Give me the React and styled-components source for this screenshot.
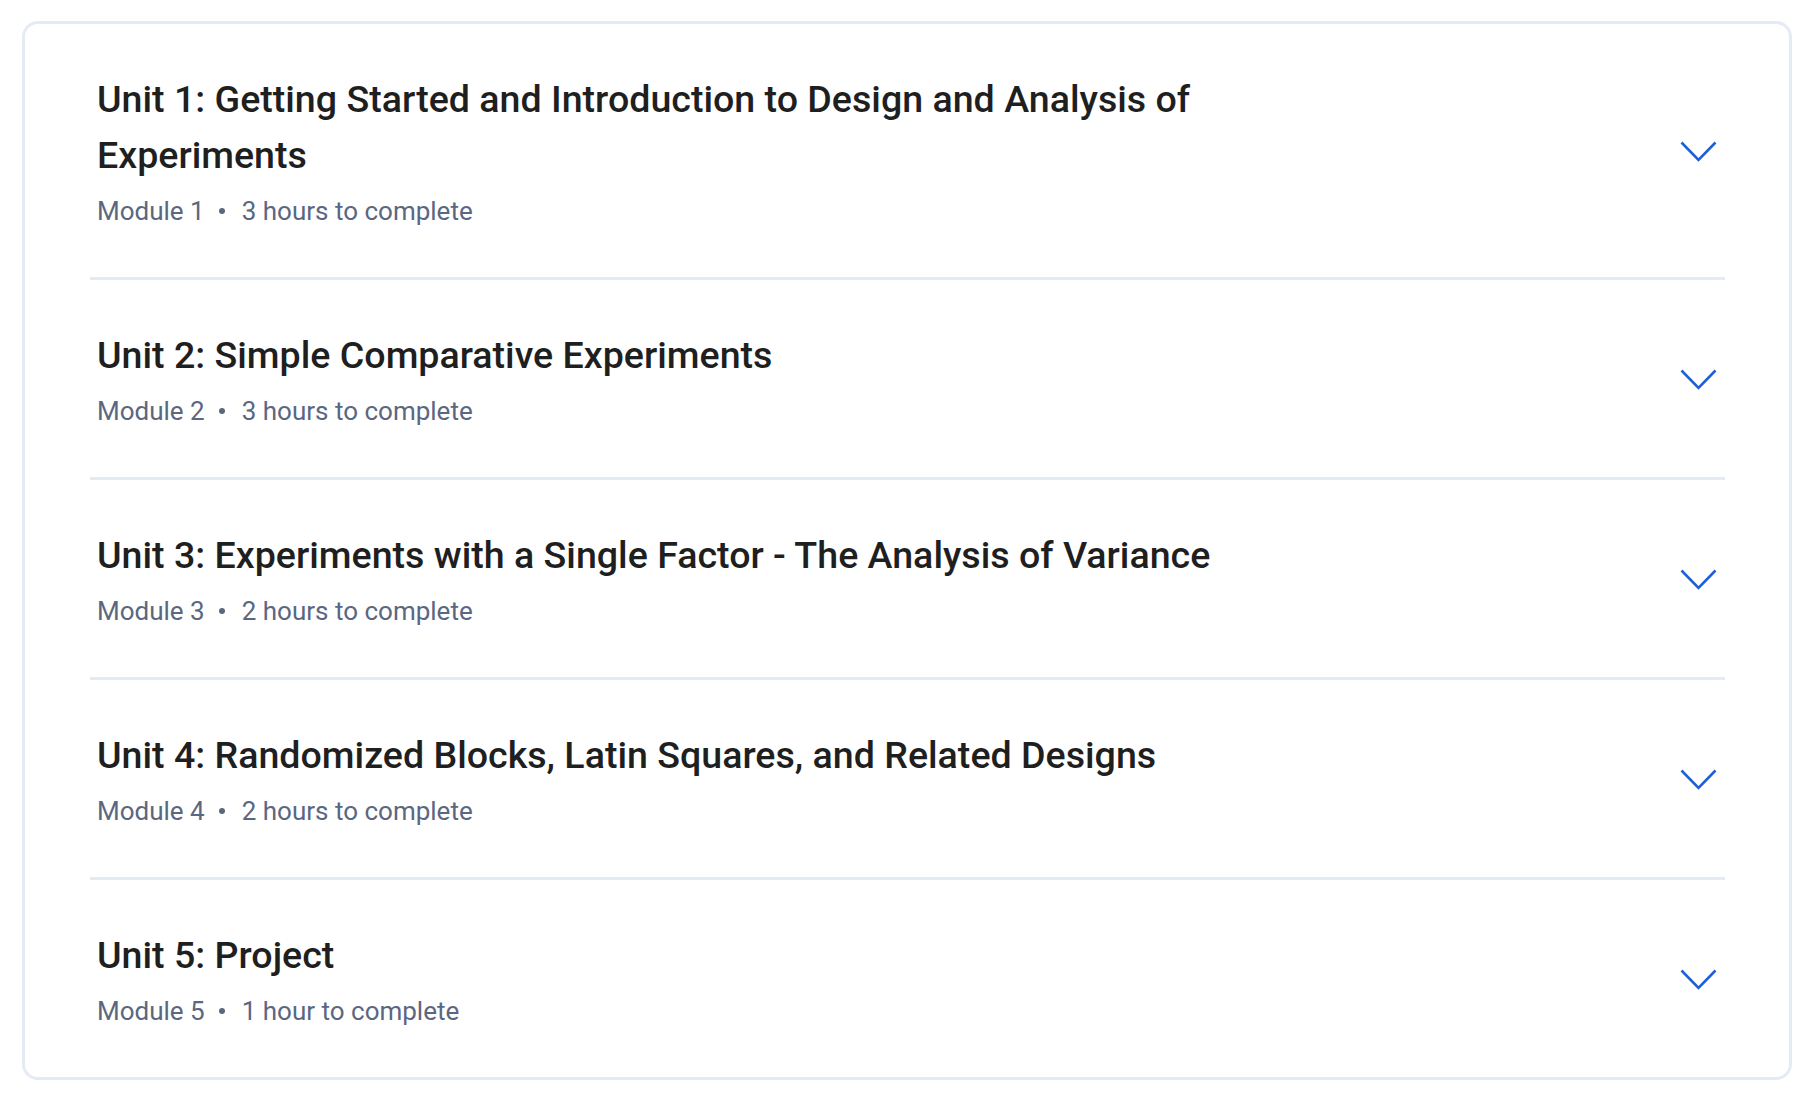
import React from "react";
import styled, { createGlobalStyle } from "styled-components";

const GlobalStyle = createGlobalStyle`
  body {
    margin: 0;
    background: #ffffff;
    font-family: "Roboto", "Liberation Sans", sans-serif;
  }
`;

const Page = styled.div`
  padding: 21px 22px 20px;
`;

const Card = styled.div`
  border: 3px solid #e5ebf4;
  border-radius: 16px;
  padding: 0 64px 0 65px;
  background: #ffffff;
`;

const Item = styled.div`
  display: flex;
  align-items: center;
  justify-content: space-between;
  padding: 47px 8px 46px 7px;
  border-top: ${props => (props.first ? "none" : "3px solid #e5ebf4")};
`;

const TextCol = styled.div`
  display: flex;
  flex-direction: column;
  max-width: 1250px;
`;

const Title = styled.h3`
  margin: 0;
  font-family: "Roboto", "Liberation Sans", sans-serif;
  font-size: 37.6px;
  line-height: 56px;
  font-weight: 500;
  color: #1f1f1f;
`;

const Meta = styled.div`
  display: flex;
  align-items: center;
  margin-top: 8px;
  font-family: "Roboto", "Liberation Sans", sans-serif;
  font-size: 26px;
  line-height: 40px;
  font-weight: 400;
  color: #5b6780;
`;

const Dot = styled.span`
  width: 6px;
  height: 6px;
  border-radius: 50%;
  background: #5b6780;
  margin: 0 17px 0 14px;
`;

const ChevronButton = styled.button`
  display: flex;
  align-items: center;
  justify-content: center;
  border: none;
  background: none;
  padding: 0;
  cursor: pointer;
  flex-shrink: 0;
`;

const Chevron = () => (
  <svg width="37" height="21" viewBox="0 0 37 21" fill="none">
    <polyline
      points="1.5,1.5 18.5,19 35.5,1.5"
      stroke="#1f5fd6"
      strokeWidth="2.6"
      fill="none"
    />
  </svg>
);

const units = [
  {
    title: "Unit 1: Getting Started and Introduction to Design and Analysis of Experiments",
    module: "Module 1",
    time: "3 hours to complete"
  },
  {
    title: "Unit 2: Simple Comparative Experiments",
    module: "Module 2",
    time: "3 hours to complete"
  },
  {
    title: "Unit 3: Experiments with a Single Factor - The Analysis of Variance",
    module: "Module 3",
    time: "2 hours to complete"
  },
  {
    title: "Unit 4: Randomized Blocks, Latin Squares, and Related Designs",
    module: "Module 4",
    time: "2 hours to complete"
  },
  {
    title: "Unit 5: Project",
    module: "Module 5",
    time: "1 hour to complete"
  }
];

export default function App() {
  return (
    <>
      <GlobalStyle />
      <Page>
        <Card>
          {units.map((unit, i) => (
            <Item key={unit.module} first={i === 0}>
              <TextCol>
                <Title>{unit.title}</Title>
                <Meta>
                  {unit.module}
                  <Dot />
                  {unit.time}
                </Meta>
              </TextCol>
              <ChevronButton aria-label="Expand">
                <Chevron />
              </ChevronButton>
            </Item>
          ))}
        </Card>
      </Page>
    </>
  );
}
